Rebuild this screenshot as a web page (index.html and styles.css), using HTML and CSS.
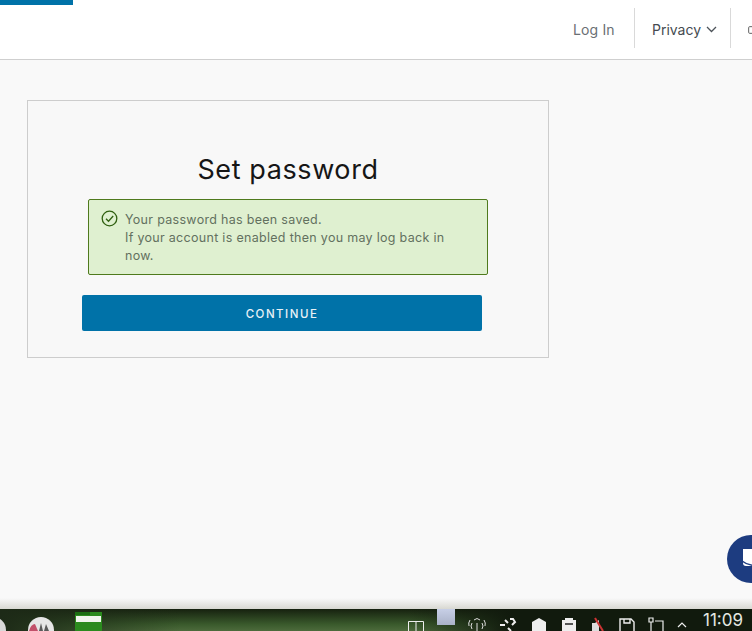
FILE: index.html
```html
<!DOCTYPE html>
<html lang="en">
<head>
<meta charset="utf-8">
<title>Set password</title>
<link rel="stylesheet" href="styles.css">
</head>
<body>
<div class="screen">
  <header class="top">
    <div class="accent"></div>
    <nav class="nav">
      <a class="nav-item login">Log In</a>
      <a class="nav-item privacy">Privacy
        <svg class="chev" width="11" height="7" viewBox="0 0 11 7"><path d="M1 1l4.500 4.500L10 1" fill="none" stroke="#4d5359" stroke-width="1.300"/></svg>
      </a>
      <a class="nav-item cut">
        <svg width="6" height="12" viewBox="0 0 6 12"><path d="M6 1H2.500Q1 1 1 2.500V9.500Q1 11 2.500 11H6" fill="none" stroke="#555" stroke-width="1.400"/></svg>
      </a>
    </nav>
  </header>
  <main class="page">
    <section class="card">
      <h1 class="title">Set password</h1>
      <div class="alert">
        <svg class="alert-icon" width="17" height="17" viewBox="0 0 17 17"><circle cx="8.500" cy="8.500" r="7.300" fill="none" stroke="#2f5f0f" stroke-width="1.300"/><path d="M5 8.800l2.500 2.500L12.200 6" fill="none" stroke="#2f5f0f" stroke-width="1.300"/></svg>
        <p class="alert-text">Your password has been saved.<br>If your account is enabled then you may log back in now.</p>
      </div>
      <button class="continue">CONTINUE</button>
    </section>
    <div class="chat">
      <svg width="25" height="26" viewBox="0 0 25 26"><path d="M5 2h20v17H8Q5 19 5 16z" fill="#fff"/><path d="M4 14q9 7 21 3" fill="none" stroke="#1d3c80" stroke-width="1.500"/></svg>
    </div>
  </main>
  <footer class="taskbar">
    <span class="round grey"></span>
    <svg class="logo" width="26" height="14" viewBox="0 0 26 14"><circle cx="13" cy="13" r="13" fill="#e6e6e6"/><path d="M1 14q2-7 6-7l3 7z" fill="#c2506a"/><path d="M11 14l2-8 2 8zM16 14l2-7 3 7z" fill="#5a5a5a"/></svg>
    <span class="app"><i class="app-top"></i><i class="app-white"></i></span>
    <div class="tray">
      <svg width="16" height="10" viewBox="0 0 16 10"><path d="M.5 10V.5h15V10M8 .5V10" fill="none" stroke="#eee"/></svg>
      <span class="t-thumb"></span>
      <svg width="18" height="14" viewBox="0 0 18 14"><path d="M9 6v8M6 3q3-3 6 0M4 6q-2 3 0 6M14 6q2 3 0 6M2 3q-2 3-1 6M16 3q2 3 1 6" fill="none" stroke="#ddd"/></svg>
      <svg width="18" height="14" viewBox="0 0 18 14"><path d="M1 8h5M6 3l3 3M11 2h3l2 3-3 3M9 11l3 3" fill="none" stroke="#eee" stroke-width="2"/></svg>
      <svg width="18" height="14" viewBox="0 0 18 14"><path d="M9 1l7 4v9H2V5z" fill="#eee"/></svg>
      <svg width="16" height="14" viewBox="0 0 16 14"><path d="M4 3V1h8v2h3v11H1V3z" fill="#eee"/><path d="M4 7h8" stroke="#222" stroke-width="1.500"/></svg>
      <svg width="16" height="14" viewBox="0 0 16 14"><path d="M2 6h3l4-3v11H2z" fill="#ddd"/><path d="M5 1l8 13" stroke="#c33" stroke-width="2"/></svg>
      <svg width="16" height="14" viewBox="0 0 16 14"><path d="M1 14V2h11l3 3v9M5 2v4h6V2" fill="none" stroke="#eee" stroke-width="1.400"/></svg>
      <svg width="16" height="14" viewBox="0 0 16 14"><path d="M7 4h8v10M1 1h4v4H1zM3 5v9" fill="none" stroke="#eee" stroke-width="1.200"/></svg>
      <svg width="10" height="14" viewBox="0 0 10 14"><path d="M1 10l4-4 4 4" fill="none" stroke="#eee" stroke-width="1.200"/></svg>
      <span class="clock">11:09</span>
    </div>
  </footer>
</div>
</body>
</html>
```
FILE: styles.css
```css
* { box-sizing: border-box; }
html, body { margin: 0; height: 100%; overflow: hidden; }
body { font-family: Inter, "Liberation Sans", sans-serif; background: #f9f9f9; }
.screen { width: 752px; height: 631px; display: flex; flex-direction: column; overflow: hidden; }

.top { height: 60px; flex: none; background: #fff; border-bottom: 1px solid #cfcfcf; display: flex; justify-content: space-between; overflow: hidden; }
.accent { width: 73px; height: 5px; background: #0072a8; }
.nav { display: flex; align-items: flex-start; margin-top: 8px; }
.nav-item { height: 40px; padding-top: 3px; display: flex; align-items: center; font-size: 14px; white-space: nowrap; border-left: 1px solid transparent; }
.login { width: 62px; color: #6a6f74; letter-spacing: .15px; }
.privacy { width: 96px; padding-left: 17px; gap: 5px; color: #454b51; border-left-color: #d9d9d9; }
.cut { width: 22px; padding-left: 17px; border-left-color: #d9d9d9; }

.page { flex: 1; position: relative; padding: 40px 0 0 27px; background-image: linear-gradient(#f9f9f9 97%, #f9f9f9 98%, #d8d8d2); }
.card { width: 522px; height: 258px; border: 1px solid #cdcdcd; background: #f8f8f8; display: flex; flex-direction: column; padding: 53px 0 0 54px; }
.title { margin: 0 0 13px 6px; width: 400px; text-align: center; font-size: 27px; line-height: 32px; font-weight: 400; color: #161616; letter-spacing: .6px; }
.alert { margin-left: 6px; width: 400px; height: 76px; display: flex; gap: 7px; padding: 10px 18px 10px 12px; background: #dff0d0; border: 1px solid #4f7a1d; border-radius: 2px; }
.alert-icon { flex: none; }
.alert-text { margin: 1px 0 0; font-size: 12.500px; line-height: 18px; letter-spacing: .3px; color: #63705f; }
.continue { margin-top: 20px; width: 400px; height: 36px; padding-top: 2px; flex: none; border: 0; border-radius: 2px; background: #0072a8; color: #e8f1f6; font: 500 11.500px Inter, "Liberation Sans", sans-serif; letter-spacing: 1.500px; }
.chat { position: absolute; left: 727px; top: 475px; width: 48px; height: 48px; border-radius: 50%; background: #1d3c80; padding: 12px 0 0 11px; }

.taskbar { height: 22px; flex: none; position: relative; display: flex; align-items: flex-start; overflow: hidden; background: linear-gradient(#16210f, #3a5a2c 70%, #4d6b3c); }
.taskbar::before { content: ""; position: absolute; left: 0; right: 300px; top: 0; bottom: 0; background: linear-gradient(90deg, #1d2a17, transparent 40%); }
.round { position: relative; flex: none; border-radius: 50%; width: 26px; height: 26px; margin-top: 8px; }
.grey { background: #d8d8d8; margin-left: -20px; }
.logo { position: relative; flex: none; margin: 8px 0 0 22px; }
.app { position: relative; flex: none; margin: 3px 0 0 21px; width: 27px; height: 19px; background: #2b8a1e; }
.app-top { position: absolute; left: 0; top: 0; width: 15px; height: 3px; background: #1b6e12; }
.app-white { position: absolute; left: 1px; top: 4px; width: 25px; height: 6px; background: #f1f5ee; }
.tray { position: absolute; left: 408px; right: 0; top: 0; bottom: 0; display: flex; align-items: flex-end; gap: 13px; background: linear-gradient(90deg, rgba(17,26,13,0), #111a0d 30%); }
.tray svg { flex: none; }
.t-thumb { flex: none; width: 18px; height: 16px; margin: 0 0 6px; background: linear-gradient(#c7cfe6, #aab2c8); }
.clock { margin: 0 0 1px 3px; font-size: 17px; line-height: 20px; color: #e4e8e2; }
```
